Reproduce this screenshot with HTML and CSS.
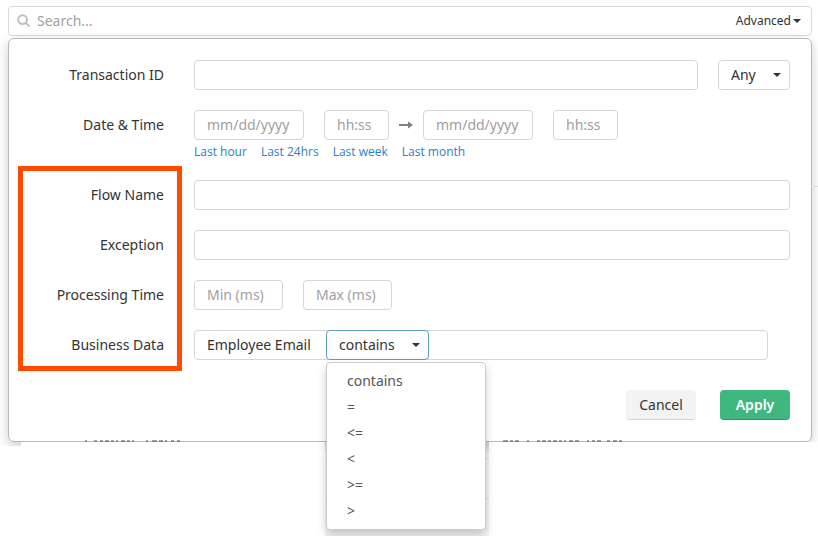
FILE: index.html
```html
<!DOCTYPE html>
<html lang="en">
<head>
<meta charset="utf-8">
<title>Transaction search</title>
<link rel="stylesheet" href="styles.css">
</head>
<body>
<form class="search">
  <div class="bar">
    <svg class="glass" viewBox="0 0 14 14" aria-hidden="true"><circle cx="5.6" cy="5.6" r="4.4"/><path d="M9 9l3.6 3.6"/></svg>
    <input class="query" type="search" placeholder="Search..." aria-label="Search">
    <button class="advanced" type="button">Advanced<span class="caret"></span></button>
  </div>
  <div class="panel">
    <div class="row">
      <label for="tid">Transaction ID</label>
      <input class="field grow" id="tid" type="text">
      <button class="field select any" type="button">Any<span class="caret"></span></button>
    </div>
    <div class="row">
      <label for="from-date">Date &amp; Time</label>
      <input class="field date" id="from-date" type="text" placeholder="mm/dd/yyyy">
      <input class="field time" type="text" placeholder="hh:ss" aria-label="Start time">
      <svg class="arrow" viewBox="0 0 14 8" aria-hidden="true"><path d="M0 3h9V0.6L14 4 9 7.4V5H0z"/></svg>
      <input class="field date" type="text" placeholder="mm/dd/yyyy" aria-label="End date">
      <input class="field time" type="text" placeholder="hh:ss" aria-label="End time">
    </div>
    <nav class="ranges">
      <a href="#hour">Last hour</a><a href="#day">Last 24hrs</a><a href="#week">Last week</a><a href="#month">Last month</a>
    </nav>
    <div class="group">
      <div class="row">
        <label for="flow">Flow Name</label>
        <input class="field grow" id="flow" type="text">
      </div>
      <div class="row">
        <label for="exception">Exception</label>
        <input class="field grow" id="exception" type="text">
      </div>
      <div class="row">
        <label for="min">Processing Time</label>
        <input class="field ms" id="min" type="text" placeholder="Min (ms)">
        <input class="field ms" type="text" placeholder="Max (ms)" aria-label="Maximum processing time">
      </div>
      <div class="row">
        <label for="business">Business Data</label>
        <div class="field compound">
          <span class="key">Employee Email</span>
          <div class="operator">
            <button class="field select open" type="button" aria-expanded="true">contains<span class="caret"></span></button>
            <ul class="menu">
              <li>contains</li><li>=</li><li>&lt;=</li><li>&lt;</li><li>&gt;=</li><li>&gt;</li>
            </ul>
          </div>
          <input class="value" id="business" type="text">
        </div>
      </div>
      <div class="highlight"></div>
    </div>
    <div class="actions">
      <button class="button" type="button">Cancel</button>
      <button class="button primary" type="submit">Apply</button>
    </div>
    <div class="rule"></div>
  </div>
</form>
<!-- Edge of the result list that lies behind the search panel -->
<div class="results">
  <svg class="sliver first" viewBox="0 0 98 2" aria-hidden="true"><path d="M1 1h2m7 0h3m3 0h3m2 0h4m2 0h3m2 0h2m3 0h4m2 0h3m2 0h2m12 0h2m4 0h5m2 0h4m2 0h2m4 0h3m3 0h3m3 0h4m2 0h2"/></svg>
  <div class="slot"></div>
  <svg class="sliver" viewBox="0 0 122 2" aria-hidden="true"><path d="M1 1h5m2 0h3m2 0h4m8 0h2m8 0h3m2 0h4m2 0h3m2 0h4m2 0h3m2 0h2m3 0h4m2 0h4m8 0h2m3 0h3m2 0h4m6 0h3m3 0h4m2 0h3m2 0h3"/></svg>
</div>
</body>
</html>
```
FILE: styles.css
```css
* { box-sizing: border-box; }
html { height: 100%; overflow: hidden; }
body { display: flex; flex-direction: column; min-height: 100%; margin: 0; background: #fff; color: #333; font: 14px/20px "Noto Sans", "Open Sans", sans-serif; }
input, button { font: inherit; color: inherit; margin: 0; }
input::placeholder { color: #a0a0a0; opacity: 1; }
.search { margin: 6px 6px 0 8px; }
.bar { display: flex; align-items: center; height: 30px; padding: 0 10px 0 8px; border: 1px solid #d9d9d9; border-radius: 4px; }
.glass { width: 14px; height: 14px; fill: none; stroke: #c0c0c0; stroke-width: 2; }
.query { flex: 1; min-width: 0; border: 0; outline: 0; padding: 0 6px; background: none; }
.advanced { display: flex; align-items: center; gap: 2px; padding: 0; border: 0; background: none; font-size: 12px; }
.caret { border: 4px solid transparent; border-top-color: #333; border-bottom: 0; }
.panel { position: relative; margin-top: 2px; padding: 21px 21px; border: 1px solid #b8b8b8; border-radius: 6px; box-shadow: 0 4px 12px rgba(0, 0, 0, .2); }
.row { display: flex; align-items: center; gap: 20px; height: 30px; margin-bottom: 20px; }
.row label { flex: none; width: 134px; margin-right: 10px; text-align: right; }
.field { min-width: 0; height: 30px; padding: 0 12px; border: 1px solid #d5d5d5; border-radius: 4px; background: #fff; }
input.field { padding-bottom: 2px; }
.grow { flex: 1; }
.select { display: flex; align-items: center; justify-content: space-between; }
.any { width: 72px; padding-right: 8px; }
.date { width: 110px; }
.time { width: 65px; }
.arrow { width: 14px; height: 8px; margin: 0 -10px; fill: #808080; }
.ms { width: 89px; }
.ranges { display: flex; gap: 14px; margin: -18px 0 18px 164px; font-family: "Open Sans", sans-serif; font-size: 12px; }
.ranges a { color: #2a7fc4; text-decoration: none; }
.group { position: relative; }
.highlight { position: absolute; left: -12px; top: -14px; width: 164px; bottom: -11px; border: 5px solid #ff4a00; pointer-events: none; }
.compound { display: flex; flex: 1; margin-right: 22px; padding: 0; }
.key { width: 131px; padding: 4px 12px; white-space: nowrap; }
.operator { position: relative; margin: -1px 0; }
.open { width: 103px; padding-right: 8px; border-color: #5d9fb8; }
.value { flex: 1; min-width: 0; border: 0; outline: 0; background: none; }
.menu { position: absolute; z-index: 2; top: 32px; left: 0; width: 160px; margin: 0; padding: 5px 0; border: 1px solid #ccc; border-radius: 4px; background: #fff; box-shadow: 0 5px 10px rgba(0, 0, 0, .2); list-style: none; color: #555; }
.menu li { padding: 3px 20px; }
.actions { display: flex; justify-content: flex-end; gap: 24px; margin-top: 30px; }
.button { width: 70px; height: 30px; padding: 0; border: 0; border-bottom: 1px solid #d4d4d4; border-radius: 4px; background: #f3f3f3; }
.primary { border-color: #2c9a6b; background: #3fb880; color: #fff; font-weight: 600; }
.rule { position: absolute; top: 147px; left: 100%; width: 7px; height: 1px; background: #ddd; }
.results { position: relative; z-index: 1; flex: 1; display: flex; align-items: flex-start; margin-left: 21px; background: #fff; }
.results::before { content: ""; position: absolute; top: 4px; right: 100%; bottom: 0; width: 21px; background: #fff; }
.slot { align-self: stretch; width: 164px; background: linear-gradient(#ddd, #ddd) 0 16px / 100% 1px no-repeat, linear-gradient(#ddd, #ddd) 0 56px / 100% 1px no-repeat, linear-gradient(#cfcfcf, #f5f5f5 14px); }
.sliver { flex: none; width: 122px; height: 2px; margin: -2px 0 0 13px; stroke: #444; stroke-width: 1; }
.first { width: 98px; margin: -2px 143px 0 63px; }
```
